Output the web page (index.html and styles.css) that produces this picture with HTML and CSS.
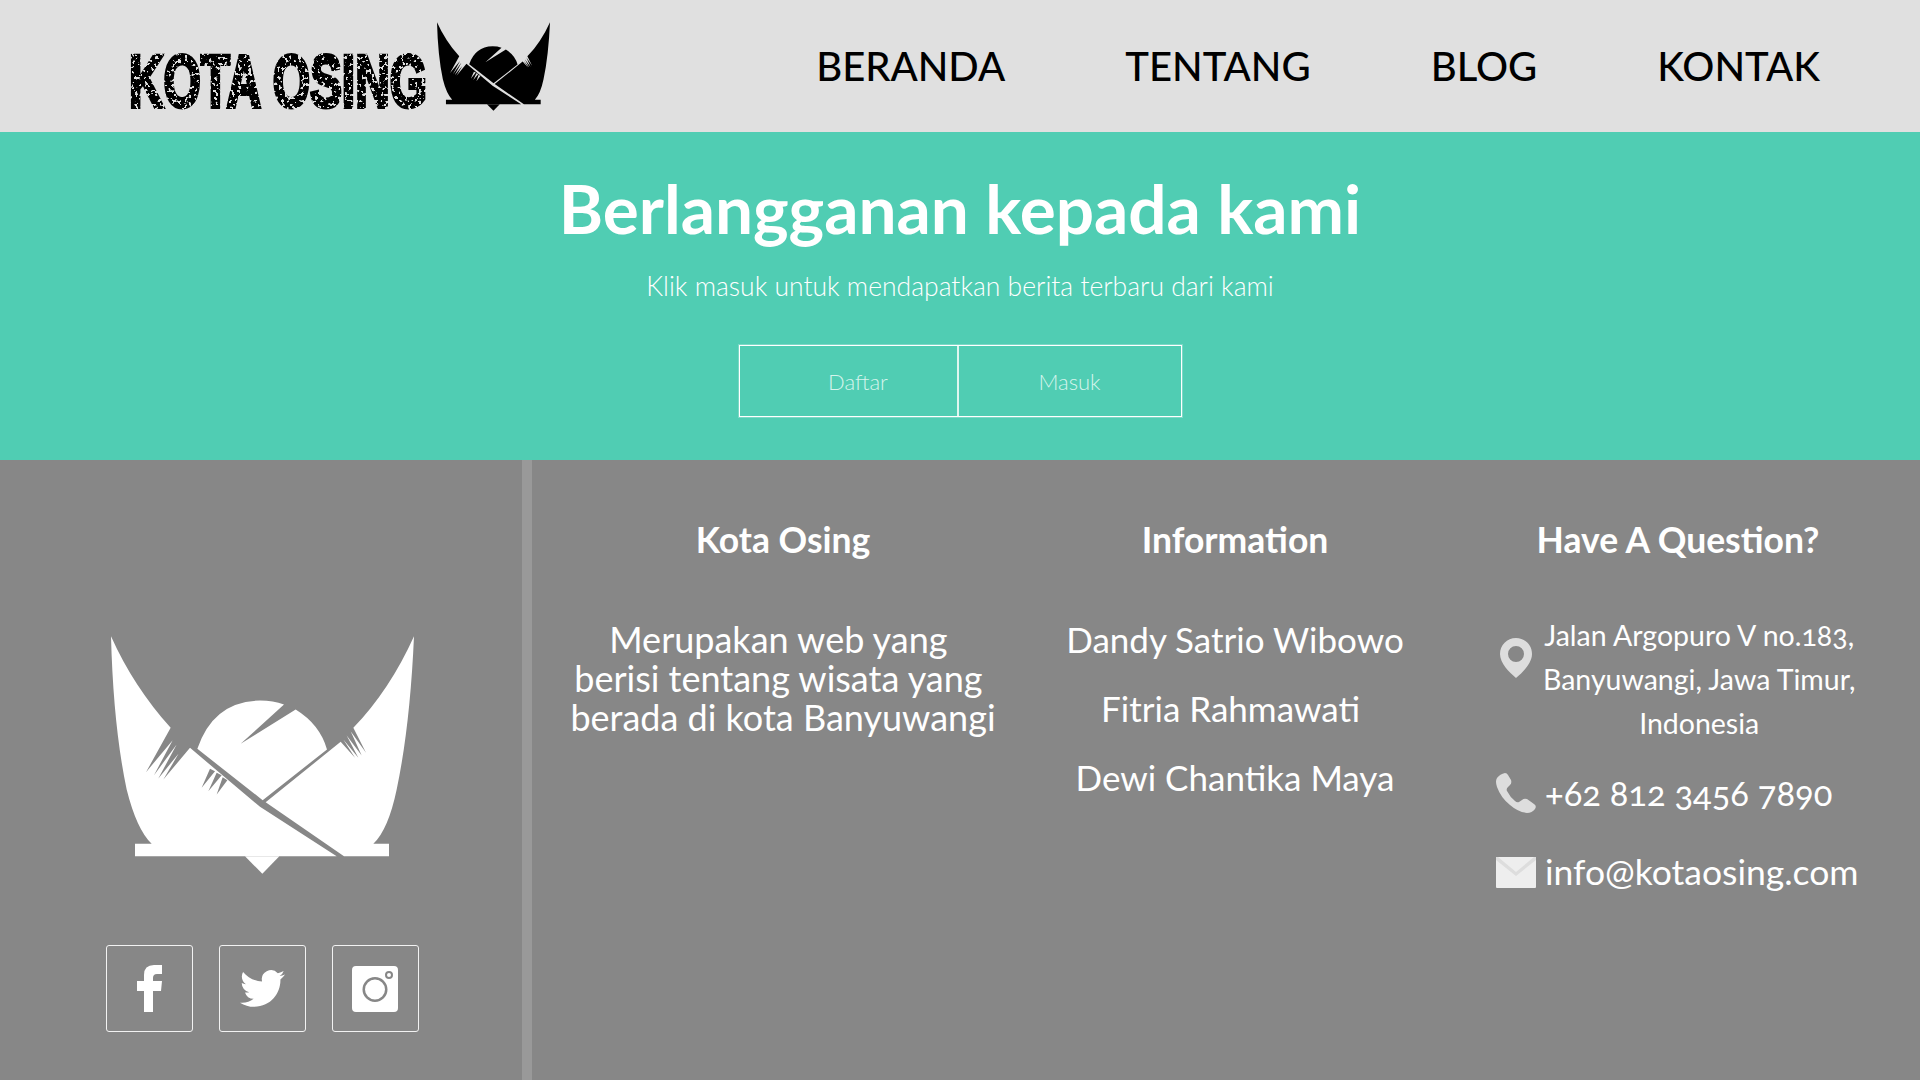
FILE: index.html
```html
<!DOCTYPE html>
<html lang="en">
<head>
	<meta charset="UTF-8">
	<title>Kota Osing</title>
	<link rel="stylesheet" href="styles.css">
</head>
<body>
	<svg class="defs" width="0" height="0">
		<filter id="grit" x="0" y="0" width="100%" height="100%">
			<feTurbulence type="fractalNoise" baseFrequency="0.3" numOctaves="2" seed="7" result="noise"/>
			<feColorMatrix in="noise" type="matrix" values="0 0 0 0 0  0 0 0 0 0  0 0 0 0 0  0 0 0 -20 12.9" result="specks"/>
			<feComposite in="SourceGraphic" in2="specks" operator="in"/>
		</filter>
		<symbol id="osing" viewBox="93 80 909 713">
			<path fill-rule="evenodd" d="M93 80Q160 230 272 355L198 488L278 392L222 497L290 405L235 507L296 432L250 510L330 415L540 592L770 740L165 740L165 703L215 703Q170 660 140 540Q100 350 93 80ZM390 478L365 535L405 485ZM410 490L385 545L425 497ZM428 503L410 555L442 512Z"/>
			<path d="M1002 80Q930 240 820 355L858 430L812 365L845 438L800 378L835 445L790 390L825 445L782 397L557 578L792 740L927 740L927 703L880 703Q925 660 950 540Q990 350 1002 80Z"/>
			<path d="M352 418Q400 275 540 273Q580 273 612 285L482 403L647 300Q720 345 741 420L548 572Z"/>
			<path d="M495 740L598 740L547 793Z"/>
		</symbol>
	</svg>

	<header class="top">
		<svg class="brand" width="425" height="132" viewBox="0 0 425 132">
			<text class="brand-name" x="4" y="107" textLength="298" lengthAdjust="spacingAndGlyphs" filter="url(#grit)">KOTA OSING</text>
			<use href="#osing" x="312" y="22" width="113" height="89"/>
		</svg>
		<nav class="menu">
			<a href="#">BERANDA</a>
			<a href="#">TENTANG</a>
			<a href="#">BLOG</a>
			<a href="#">KONTAK</a>
		</nav>
	</header>

	<section class="subscribe">
		<h1>Berlangganan kepada kami</h1>
		<p>Klik masuk untuk mendapatkan berita terbaru dari kami</p>
		<div class="btn-group">
			<a class="btn btn-daftar" href="#">Daftar</a>
			<a class="btn btn-masuk" href="#">Masuk</a>
		</div>
	</section>

	<footer class="foot">
		<div class="foot-side">
			<svg class="foot-logo" width="303" height="238"><use href="#osing" width="303" height="238"/></svg>
			<div class="social">
				<a href="#"><svg width="25" height="47" viewBox="0 0 25 47"><path d="M7 47V26H0V16H7V10Q7 0 17 0H25V9H20Q16 9 16 13V16H25L24 26H16V47Z"/></svg></a>
				<a href="#"><svg width="45" height="45" viewBox="0 0 24 24"><path d="M23.953 4.57a10 10 0 01-2.825.775 4.958 4.958 0 002.163-2.723c-.951.555-2.005.959-3.127 1.184a4.92 4.92 0 00-8.384 4.482C7.69 8.095 4.067 6.13 1.64 3.162a4.822 4.822 0 00-.666 2.475c0 1.71.87 3.213 2.188 4.096a4.904 4.904 0 01-2.228-.616v.06a4.923 4.923 0 003.946 4.827 4.996 4.996 0 01-2.212.085 4.936 4.936 0 004.604 3.417 9.867 9.867 0 01-6.102 2.105c-.39 0-.779-.023-1.17-.067a13.995 13.995 0 007.557 2.209c9.053 0 13.998-7.496 13.998-13.985 0-.21 0-.42-.015-.63A9.935 9.935 0 0024 4.59z"/></svg></a>
				<a href="#"><svg width="46" height="46" viewBox="0 0 46 46"><path fill-rule="evenodd" d="M4 0H42Q46 0 46 4V42Q46 46 42 46H4Q0 46 0 42V4Q0 0 4 0ZM23 11A12.500 12.500 0 1 0 23 36A12.500 12.500 0 1 0 23 11ZM23 13.500A10 10 0 1 1 23 33.500A10 10 0 1 1 23 13.500ZM37 5A4 4 0 1 0 37 13A4 4 0 1 0 37 5ZM37 7A2 2 0 1 1 37 11A2 2 0 1 1 37 7Z"/></svg></a>
			</div>
		</div>

		<div class="foot-col col-about">
			<h3>Kota Osing</h3>
			<p class="about-text">Merupakan web yang&nbsp;<br>berisi tentang wisata yang&nbsp;<br>berada di kota Banyuwangi</p>
		</div>

		<div class="foot-col col-info">
			<h3>Information</h3>
			<ul class="names">
				<li>Dandy Satrio Wibowo</li>
				<li>Fitria Rahmawati&nbsp;</li>
				<li>Dewi Chantika Maya</li>
			</ul>
		</div>

		<div class="foot-col col-contact">
			<h3>Have A Question?</h3>
			<div class="contact-row row-address">
				<svg class="pin" width="32" height="40" viewBox="0 0 32 40"><path fill-rule="evenodd" d="M16 0C7 0 0 7 0 16C0 25 9 34 16 40C23 34 32 25 32 16C32 7 25 0 16 0ZM16 8A8 8 0 1 1 16 24A8 8 0 1 1 16 8Z"/></svg>
				<address>Jalan Argopuro V no.183,<br>Banyuwangi, Jawa Timur,<br>Indonesia</address>
			</div>
			<div class="contact-row">
				<svg width="40" height="40" viewBox="0 0 40 40"><path d="M9 0Q4 1 1 5Q-1 8 1 14Q5 25 14 32Q22 39 31 40Q36 40 39 36Q41 33 38 31L31 26Q28 25 26 27L23 29Q21 30 19 28Q14 24 11 18Q10 16 12 14L14 12Q16 10 15 7L12 2Q11 0 9 0Z"/></svg>
				<span class="contact-text text-phone">+62 812 3456 7890</span>
			</div>
			<div class="contact-row">
				<svg width="40" height="31" viewBox="0 0 40 31"><path class="mail-back" d="M1 0H39Q40 0 40 1V30Q40 31 39 31H1Q0 31 0 30V1Q0 0 1 0Z"/><path class="mail-flap" d="M2 0L20 15L38 0H40V3L20 19L0 3V0Z"/></svg>
				<span class="contact-text text-mail">info@kotaosing.com</span>
			</div>
		</div>
	</footer>
</body>
</html>
```

FILE: styles.css
```css
* {
	box-sizing: border-box;
}
html,body {
	margin: 0;
	overflow: hidden;
}
body {
	font-family: "Lato", "Open Sans", sans-serif;
	color: #fff;
	background: #878787;
}
a {
	color: inherit;
	text-decoration: none;
}
h1,h3,p,ul,address {
	margin: 0;
	padding: 0;
	font-style: normal;
}
.defs {
	display: block;
	height: 0;
}

/* header */
.top {
	height: 132px;
	background: #e0e0e0;
	display: flex;
	justify-content: space-between;
	align-items: center;
	padding: 0 100px 0 125px;
}
.brand {
	fill: #000;
	overflow: visible;
}
.brand-name {
	font-family: "Liberation Sans Narrow", "Liberation Sans", sans-serif;
	font-weight: 700;
	font-size: 74px;
	stroke: #000;
	stroke-width: 4px;
}
.menu {
	display: flex;
	gap: 120px;
	color: #000;
	font-size: 40px;
	font-weight: 500;
}

/* langganan */
.subscribe {
	height: 328px;
	background: #50cdb3;
	text-align: center;
	padding-top: 38px;
}
.subscribe h1 {
	font-size: 67.5px;
	line-height: 76px;
	font-weight: 700;
}
.subscribe p {
	margin-top: 25px;
	font-size: 26.5px;
	line-height: 30px;
	font-weight: 300;
}
.btn-group {
	display: flex;
	width: 443px;
	height: 72px;
	margin: 44px auto 0;
	border: 1px solid #fff;
	box-shadow: 0 0 0 1px rgba(255,255,255,.25);
	font-size: 22px;
	font-weight: 300;
	color: #d5f4ec;
}
.btn {
	display: flex;
	align-items: center;
	justify-content: center;
}
.btn-daftar {
	width: 219px;
	border-right: 2px solid #dff6f0;
	padding-left: 20px;
}
.btn-masuk {
	flex: 1;
}

/* footer */
.foot {
	height: 620px;
	display: flex;
}
.foot-side {
	width: 532px;
	border-right: 10px solid #999;
	display: flex;
	flex-direction: column;
	align-items: center;
	padding-top: 176px;
	padding-left: 2px;
}
.foot-logo {
	fill: #fff;
}
.social {
	display: flex;
	gap: 26px;
	margin-top: 71px;
}
.social a {
	width: 87px;
	height: 87px;
	border: 1px solid #f2f2f2;
	border-radius: 3px;
	display: flex;
	align-items: center;
	justify-content: center;
	fill: #fff;
}
.foot-col {
	text-align: center;
	padding-top: 56px;
}
.foot-col h3 {
	font-size: 35.5px;
	line-height: 48px;
	font-weight: 700;
}
.col-about {
	width: 502px;
}
.about-text {
	margin-top: 56px;
	font-size: 36px;
	line-height: 39px;
}
.col-info {
	width: 402px;
}
.names {
	list-style: none;
	margin-top: 55px;
	font-size: 35px;
	line-height: 41px;
}
.names li {
	margin-bottom: 28px;
}
.col-contact {
	width: 484px;
}
.contact-row {
	display: flex;
	align-items: center;
	gap: 9px;
	margin-left: 60px;
	margin-bottom: 31px;
	fill: #ddd;
	text-align: left;
	font-variant-numeric: oldstyle-nums;
}
.row-address {
	align-items: flex-start;
	margin-top: 49px;
	margin-bottom: 24px;
	gap: 11px;
	padding-left: 4px;
}
.pin {
	margin-top: 25px;
}
address {
	font-size: 28.5px;
	line-height: 44px;
	text-align: center;
	white-space: nowrap;
}
.contact-text {
	white-space: nowrap;
	line-height: 48px;
}
.text-phone {
	font-size: 34.5px;
}
.text-mail {
	font-size: 35.5px;
}
.mail-back {
	fill: #eee;
}
.mail-flap {
	fill: #ddd;
}
```
